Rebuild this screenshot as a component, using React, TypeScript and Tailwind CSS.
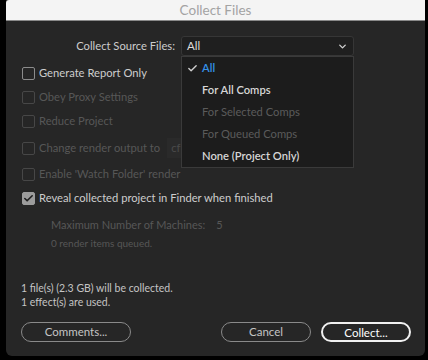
import { Check, ChevronDown } from "lucide-react";

const font = { fontFamily: "Lato, 'Open Sans', sans-serif" };

const Box = ({ checked, disabled }: { checked?: boolean; disabled?: boolean }) => (
  <div
    className={`w-[13px] h-[13px] rounded-[2px] border-[1.5px] flex items-center justify-center shrink-0 ${
      checked
        ? "bg-[#9c9c9c] border-[#9c9c9c]"
        : disabled
        ? "border-[#474747]"
        : "border-[#8c8c8c]"
    }`}
  >
    {checked && <Check className="w-[11px] h-[11px] text-[#1e1e1e]" strokeWidth={3.5} />}
  </div>
);

const Row = ({
  label,
  checked,
  disabled,
  className = "",
  children,
}: {
  label: string;
  checked?: boolean;
  disabled?: boolean;
  className?: string;
  children?: React.ReactNode;
}) => (
  <div className={`flex items-center gap-[4px] h-[20px] ${className}`}>
    <Box checked={checked} disabled={disabled} />
    <span className={`text-[11.2px] ${disabled ? "text-[#575757]" : "text-[#cdcdcd]"}`}>{label}</span>
    {children}
  </div>
);

export default function App() {
  return (
    <div className="w-[428px] h-[360px] bg-black overflow-hidden" style={font}>
      <div className="ml-[6px] w-[419px] h-[356px] bg-[#262626] rounded-b-[6px] flex flex-col relative">
        {/* Title bar */}
        <div className="h-[21px] bg-[#f4f4f4] border-b border-[#8a8a8a] rounded-tl-[3px] flex items-center justify-center">
          <span className="text-[13.5px] text-[#a3a3a3]">Collect Files</span>
        </div>

        {/* Source files select */}
        <div className="flex items-center mt-[15px] h-[20px]">
          <span className="w-[169px] text-right text-[11.2px] text-[#cdcdcd]">Collect Source Files:</span>
          <div className="ml-[6px] w-[173px] h-[20px] bg-[#1f1f1f] border border-[#363636] rounded-[3px] flex items-center px-[5px]">
            <span className="text-[11.5px] text-[#dcdcdc] flex-1">All</span>
            <ChevronDown className="w-[11px] h-[11px] text-[#d0d0d0]" strokeWidth={3} />
          </div>
        </div>

        {/* Options */}
        <div className="flex flex-col pl-[16px] mt-[7px]">
          <Row label="Generate Report Only" />
          <Row label="Obey Proxy Settings" disabled className="mt-[4px]" />
          <Row label="Reduce Project" disabled className="mt-[4px]" />
          <Row label="Change render output to" disabled className="mt-[7px]">
            <div className="ml-[3px] w-[40px] h-[20px] bg-[#2a2a2a] text-[11.2px] text-[#4a4a4a] pl-[4px] leading-[20px]">cf c</div>
          </Row>
          <Row label="Enable 'Watch Folder' render" disabled className="mt-[6px]" />
          <Row label="Reveal collected project in Finder when finished" checked className="mt-[4px]" />

          <div className="pl-[29px] mt-[9px] text-[11px] text-[#575757] flex gap-[11px]">
            <span>Maximum Number of Machines:</span>
            <span>5</span>
          </div>
          <div className="pl-[29px] mt-[2px] text-[10px] text-[#575757]">0 render items queued.</div>
        </div>

        {/* Summary */}
        <div className="pl-[15px] mt-[30px] text-[10.5px] text-[#c4c4c4] leading-[14px]">
          <div>1 file(s) (2.3 GB) will be collected.</div>
          <div>1 effect(s) are used.</div>
        </div>

        {/* Buttons */}
        <div className="flex items-center pl-[15px] pr-[14px] mt-[13px]">
          <button className="w-[110px] h-[20px] rounded-full border-[1.5px] border-[#8a8a8a] text-[11.5px] text-[#c4c4c4]">
            Comments...
          </button>
          <div className="flex-1" />
          <button className="w-[90px] h-[20px] rounded-full border-[1.5px] border-[#8a8a8a] text-[11.5px] text-[#c4c4c4]">
            Cancel
          </button>
          <button className="ml-[10px] w-[90px] h-[20px] rounded-full border-2 border-[#f0f0f0] text-[11.5px] text-white">
            Collect...
          </button>
        </div>

        {/* Open dropdown menu */}
        <div className="absolute left-[175px] top-[56px] w-[173px] bg-[#1c1c1c] border border-[#3a3a3a] text-[11.2px] font-semibold">
          <div className="h-[22px] flex items-center pl-[20px] relative text-[#3591e8]">
            <Check className="absolute left-[5px] w-[11px] h-[11px] text-[#cfcfcf]" strokeWidth={3} />
            All
          </div>
          <div className="h-[22px] flex items-center pl-[20px] text-[#d6d6d6]">For All Comps</div>
          <div className="h-[22px] flex items-center pl-[20px] text-[#5b5b5b] font-normal">For Selected Comps</div>
          <div className="h-[22px] flex items-center pl-[20px] text-[#5b5b5b] font-normal">For Queued Comps</div>
          <div className="h-[22px] flex items-center pl-[20px] text-[#d6d6d6]">None (Project Only)</div>
        </div>
      </div>
    </div>
  );
}
